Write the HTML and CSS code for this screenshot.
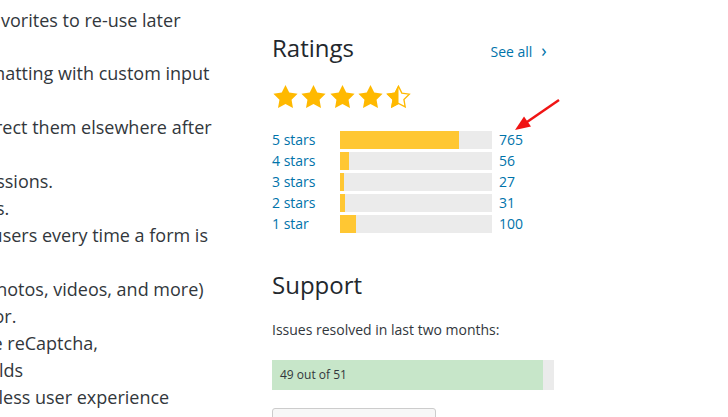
FILE: index.html
```html
<!DOCTYPE html>
<html>
<head>
<meta charset="utf-8">
<title>Ratings and Support</title>
<link rel="stylesheet" href="styles.css">
</head>
<body>
<div class="page">
    <div class="features">
        <div class="line"><span class="cut" style="margin-left: 1px">vorites to re-use later</span></div>
        <div class="line"></div>
        <div class="line"><span class="cut" style="margin-left: -11.5px">matting with custom input</span></div>
        <div class="line"></div>
        <div class="line"><span class="cut" style="margin-left: -5px">rect them elsewhere after</span></div>
        <div class="line"></div>
        <div class="line"><span class="cut" style="margin-left: -3.8px">ssions.</span></div>
        <div class="line"><span class="cut" style="margin-left: -4px">s.</span></div>
        <div class="line"><span class="cut" style="margin-left: -8.4px">users every time a form is</span></div>
        <div class="line"></div>
        <div class="line"><span class="cut" style="margin-left: -3.8px">hotos, videos, and more)</span></div>
        <div class="line"><span class="cut" style="margin-left: -6.5px">or.</span></div>
        <div class="line"><span class="cut" style="margin-left: -7.5px">e reCaptcha,</span></div>
        <div class="line"><span class="cut" style="margin-left: -1px">lds</span></div>
        <div class="line"><span class="cut" style="margin-left: -1.5px">less user experience</span></div>
    </div>

    <div class="sidebar">
        <div class="section-head">
            <h2>Ratings</h2>
            <a class="see-all" href="#">See all <span class="chevron">&#8250;</span></a>
        </div>

        <div class="stars">
            <svg class="star" viewBox="2 2 20 19"><path d="M12 2l3.09 6.26L22 9.27l-5 4.87 1.18 6.88L12 17.77l-6.18 3.25L7 14.14 2 9.27l6.91-1.01L12 2z"/></svg>
            <svg class="star" viewBox="2 2 20 19"><path d="M12 2l3.09 6.26L22 9.27l-5 4.87 1.18 6.88L12 17.77l-6.18 3.25L7 14.14 2 9.27l6.91-1.01L12 2z"/></svg>
            <svg class="star" viewBox="2 2 20 19"><path d="M12 2l3.09 6.26L22 9.27l-5 4.87 1.18 6.88L12 17.77l-6.18 3.25L7 14.14 2 9.27l6.91-1.01L12 2z"/></svg>
            <svg class="star" viewBox="2 2 20 19"><path d="M12 2l3.09 6.26L22 9.27l-5 4.87 1.18 6.88L12 17.77l-6.18 3.25L7 14.14 2 9.27l6.91-1.01L12 2z"/></svg>
            <svg class="star half" viewBox="2 2 20 19">
                <defs><clipPath id="left-half"><rect x="0" y="0" width="12" height="24"/></clipPath></defs>
                <path class="outline" d="M12 3.1l2.76 5.6 6.17.9-4.46 4.35 1.05 6.14L12 17.2l-5.52 2.9 1.05-6.14L3.07 9.6l6.17-.9L12 3.1z"/>
                <path clip-path="url(#left-half)" d="M12 2l3.09 6.26L22 9.27l-5 4.87 1.18 6.88L12 17.77l-6.18 3.25L7 14.14 2 9.27l6.91-1.01L12 2z"/>
            </svg>
        </div>

        <div class="rating-rows">
            <div class="rating-row">
                <a href="#">5 stars</a>
                <div class="bar"><div class="bar-fill" style="width: 78.1%"></div></div>
                <a class="count" href="#">765</a>
            </div>
            <div class="rating-row">
                <a href="#">4 stars</a>
                <div class="bar"><div class="bar-fill" style="width: 5.7%"></div></div>
                <a class="count" href="#">56</a>
            </div>
            <div class="rating-row">
                <a href="#">3 stars</a>
                <div class="bar"><div class="bar-fill" style="width: 2.8%"></div></div>
                <a class="count" href="#">27</a>
            </div>
            <div class="rating-row">
                <a href="#">2 stars</a>
                <div class="bar"><div class="bar-fill" style="width: 3.2%"></div></div>
                <a class="count" href="#">31</a>
            </div>
            <div class="rating-row">
                <a href="#">1 star</a>
                <div class="bar"><div class="bar-fill" style="width: 10.2%"></div></div>
                <a class="count" href="#">100</a>
            </div>
        </div>

        <h2 class="support-title">Support</h2>
        <p class="support-text">Issues resolved in last two months:</p>
        <div class="resolved">
            <div class="resolved-fill" style="width: 96.1%">49 out of 51</div>
        </div>
        <a class="button" href="#">View support forum</a>
    </div>
</div>

<svg class="arrow" width="60" height="40" viewBox="0 0 60 40">
    <line x1="54" y1="5" x2="22" y2="27" stroke="#f01414" stroke-width="2.5"/>
    <polygon points="10,35 26,31.6 19,21.6" fill="#f01414"/>
</svg>
</body>
</html>
```

FILE: styles.css
```css
body {
    margin: 0;
    background-color: #fff;
    color: #32373c;
    font-family: "Open Sans", "Noto Sans", sans-serif;
    overflow: hidden;
}

a {
    color: #0073aa;
    text-decoration: none;
}

.page {
    display: flex;
    width: 728px;
}

.features {
    width: 272px;
    flex-shrink: 0;
    padding-top: 6.6px;
    font-size: 18px;
    line-height: 26.93px;
    white-space: nowrap;
    overflow: hidden;
}

.line {
    height: 26.93px;
}

.cut {
    display: inline-block;
}

.sidebar {
    width: 282px;
    flex-shrink: 0;
}

.section-head {
    display: flex;
    justify-content: space-between;
    align-items: baseline;
    margin-top: 32px;
}

h2 {
    font-size: 24px;
    font-weight: 400;
    line-height: 31px;
    color: #23282d;
    margin: 0;
}

.see-all {
    font-size: 14px;
}

.chevron {
    display: inline-block;
    width: 20px;
    text-align: center;
    font-size: 18px;
    margin-left: -2px;
}

.stars {
    display: flex;
    gap: 3.3px;
    margin: 22px 0 0 1px;
    height: 24px;
}

.star {
    width: 25px;
    height: 23px;
    fill: #ffb900;
}

.star .outline {
    fill: #fff;
    stroke: #ffb900;
    stroke-width: 1.1;
}

.rating-rows {
    margin-top: 20px;
}

.rating-row {
    display: grid;
    grid-template-columns: 68px 152px auto;
    align-items: center;
    height: 21px;
    font-size: 14px;
}

.count {
    margin-left: 7px;
}

.bar {
    height: 18px;
    background-color: #ebebeb;
}

.bar-fill {
    height: 100%;
    background-color: #ffc733;
}

.support-title {
    margin-top: 35px;
}

.support-text {
    font-size: 14px;
    margin: 20px 0 0;
}

.resolved {
    margin-top: 21px;
    height: 30px;
    background-color: #ebebeb;
}

.resolved-fill {
    height: 100%;
    background-color: #c7e6c9;
    font-size: 12px;
    line-height: 30px;
    padding-left: 8px;
    box-sizing: border-box;
    white-space: nowrap;
}

.button {
    display: inline-block;
    margin-top: 18px;
    width: 164px;
    height: 30px;
    box-sizing: border-box;
    border: 1px solid #ccc;
    border-radius: 3px;
    background-color: #f7f7f7;
    color: #555;
    font-size: 13px;
    line-height: 28px;
    text-align: center;
}

.arrow {
    position: absolute;
    left: 505px;
    top: 95px;
}
```
